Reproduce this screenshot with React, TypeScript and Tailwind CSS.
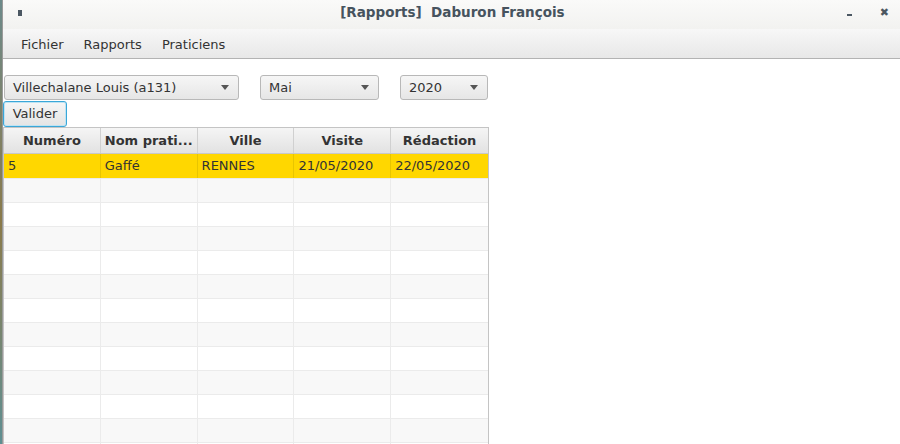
const rows = [
  { num: "5", nom: "Gaffé", ville: "RENNES", visite: "21/05/2020", redaction: "22/05/2020" },
];

const columns = ["Numéro", "Nom prati...", "Ville", "Visite", "Rédaction"];

const Combo = ({ label, width }: { label: string; width: string }) => (
  <div
    className={`${width} h-[25px] flex items-center justify-between pl-2 pr-[9px] rounded-[3px] border border-[#b8b8b8] bg-gradient-to-b from-[#f6f6f6] to-[#e6e6e6] text-[13px] text-[#333]`}
  >
    <span>{label}</span>
    <span className="w-0 h-0 border-l-[4px] border-r-[4px] border-t-[5px] border-l-transparent border-r-transparent border-t-[#555]" />
  </div>
);

export default function App() {
  const emptyRows = Array.from({ length: 12 });

  return (
    <div className="flex h-[444px] w-[900px] overflow-hidden bg-white font-['DejaVu_Sans',sans-serif]">
      {/* desktop edge */}
      <div className="w-[3px] shrink-0 bg-gradient-to-b from-[#6c8a8a] via-[#8a7a4a] to-[#5e8f92] border-r border-[#9a9a9a]" />

      <div className="flex-1 flex flex-col min-w-0">
        {/* Title bar */}
        <div className="h-[29px] shrink-0 flex items-center bg-gradient-to-b from-[#fafaf9] to-[#f2f2f0] relative">
          <div className="ml-[15px] mb-[4px] w-[4px] h-[6px] bg-[#4b5762]" />
          <div className="flex-1 text-center font-bold text-[13.5px] text-[#46535e] pl-[36px] pb-[4px]">
            [Rapports]&nbsp;&nbsp;Daburon François
          </div>
          <div className="w-[5px] h-[2px] bg-[#4b5762] mr-[28px]" />
          <div className="mr-[11px] mb-[4px] text-[#4b5762] text-[11px] font-bold leading-none">✖</div>
        </div>

        {/* Menu bar */}
        <div className="h-[30px] shrink-0 flex items-center gap-[20px] pl-[18px] pt-[2px] bg-gradient-to-b from-[#f7f7f7] to-[#e8e8e8] border-b border-[#b3b3b3] text-[13px] text-[#333]">
          <span>Fichier</span>
          <span>Rapports</span>
          <span>Praticiens</span>
        </div>

        {/* Filters */}
        <div className="flex items-center mt-[16px] ml-[1px]">
          <Combo label="Villechalane Louis (a131)" width="w-[235px]" />
          <div className="w-[21px]" />
          <Combo label="Mai" width="w-[119px]" />
          <div className="w-[21px]" />
          <Combo label="2020" width="w-[88px]" />
        </div>

        <div className="mt-[1px]">
          <button className="h-[26px] w-[64px] rounded-[3px] border border-[#3aa7d8] bg-gradient-to-b from-[#f6f6f6] to-[#e4e4e4] text-[13px] text-[#333] shadow-[inset_0_0_0_1px_#bfe3f3]">
            Valider
          </button>
        </div>

        {/* Table */}
        <div className="w-[486px] flex-1 border-l border-r border-t border-[#c4c4c4] overflow-hidden">
          <div className="grid grid-cols-5 h-[26px] bg-gradient-to-b from-[#f5f5f5] to-[#e2e2e2] border-b border-[#c8c8c8]">
            {columns.map((c) => (
              <div
                key={c}
                className="flex items-center justify-center font-bold text-[13px] text-[#333] border-r border-[#d0d0d0] last:border-r-0"
              >
                {c}
              </div>
            ))}
          </div>

          {rows.map((r) => (
            <div key={r.num} className="grid grid-cols-5 h-[24px] bg-[#ffd700] text-[13px] text-[#333]">
              {[r.num, r.nom, r.ville, r.visite, r.redaction].map((v, i) => (
                <div key={i} className="flex items-center pl-[4px] border-r border-[#e8c500] last:border-r-0">
                  {v}
                </div>
              ))}
            </div>
          ))}

          {emptyRows.map((_, i) => (
            <div
              key={i}
              className={`grid grid-cols-5 h-[24px] border-t border-[#ebebeb] ${i % 2 === 0 ? "bg-[#f8f8f8]" : "bg-white"}`}
            >
              {columns.map((c) => (
                <div key={c} className="border-r border-[#ebebeb] last:border-r-0" />
              ))}
            </div>
          ))}
        </div>
      </div>
    </div>
  );
}
